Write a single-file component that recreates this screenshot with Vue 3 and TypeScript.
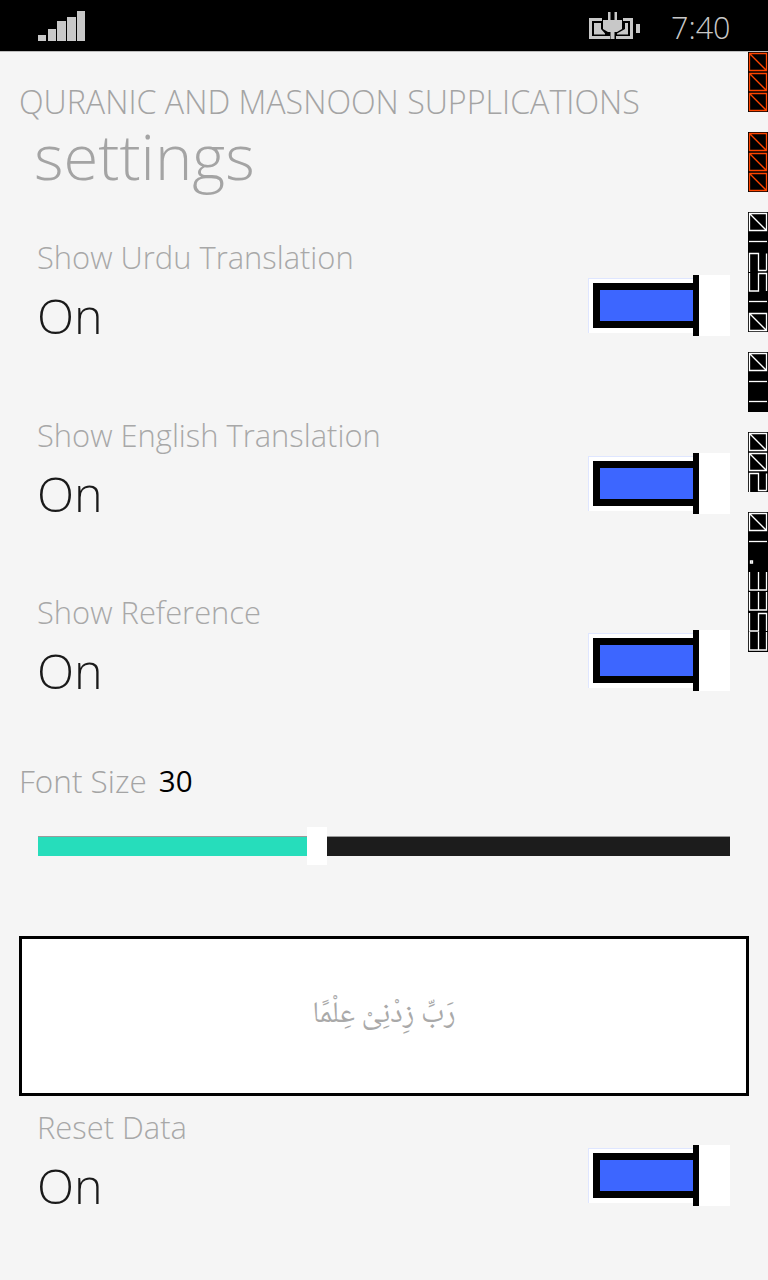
<script setup lang="ts">
interface Row { label: string; value: string }
const rows: Row[] = [
  { label: 'Show Urdu Translation', value: 'On' },
  { label: 'Show English Translation', value: 'On' },
  { label: 'Show Reference', value: 'On' },
]
const box = 'M1.5 1.5H18.5V18.5H1.5ZM1.5 1.5L18.5 18.5'
const line = 'M1 9.5H19'
const a = 'M1.5 20V1.5H10.5V18.5H18.5M18.5 1.5V18.5'
const b = 'M1.5 1V19H10.5V1.5H18.5V19'
const u = 'M1.5 0V18H18.5V0M10.5 0V18'
const dot = 'M2.5 9H4.5V11H2.5Z'
const groups: { color: string; cells: string[] }[] = [
  { color: '#ff4500', cells: [box, box, box] },
  { color: '#ff4500', cells: [box, box, box] },
  { color: '#ffffff', cells: [box, line, a, b, line, box] },
  { color: '#ffffff', cells: [box, line, line] },
  { color: '#ffffff', cells: [box, box, a] },
  { color: '#ffffff', cells: [box, line, dot, u, u, b, u] },
]
</script>

<template>
  <div class="page">
    <header class="status">
      <svg class="signal" width="47" height="30" viewBox="0 0 47 30">
        <rect x="0" y="24" width="8" height="6" />
        <rect x="10" y="18" width="8" height="12" />
        <rect x="19" y="10" width="9" height="20" />
        <rect x="29" y="6" width="9" height="24" />
        <rect x="39" y="0" width="8" height="30" />
      </svg>
      <svg class="battery" width="52" height="29" viewBox="0 0 52 29">
        <path d="M0 7H13V10H3V25H21V28H0ZM34 7H44V28H27V25H41V10H34Z" />
        <path d="M5 12H12V18L16 22.5V23.5H5ZM36 12H39V23.5H28V22.5L36 18Z" />
        <rect x="47" y="13" width="4" height="9" />
        <path d="M19 1H21.5V9H25.5V1H28V9H33V18L28 21H25.5V28H21.5V21H19L14 18V9H19Z" />
      </svg>
      <span class="clock">7:40</span>
    </header>

    <main class="content">
      <div class="app-title">QURANIC AND MASNOON SUPPLICATIONS</div>
      <h1 class="page-title">settings</h1>

      <section v-for="row in rows" :key="row.label" class="setting">
        <div class="setting-text">
          <div class="setting-label">{{ row.label }}</div>
          <div class="setting-value">{{ row.value }}</div>
        </div>
        <div class="toggle">
          <div class="toggle-frame"></div>
          <div class="toggle-knob"></div>
          <div class="toggle-rest"></div>
        </div>
      </section>

      <div class="font-row">
        <span class="font-label">Font Size</span>
        <span class="font-value">30</span>
      </div>

      <div class="slider">
        <div class="slider-on"></div>
        <div class="slider-thumb"></div>
        <div class="slider-off"></div>
      </div>

      <div class="preview">
        <span class="arabic" dir="rtl" lang="ar">رَبِّ زِدْنِىْ عِلْمًا</span>
      </div>

      <section class="setting reset">
        <div class="setting-text">
          <div class="setting-label">Reset Data</div>
          <div class="setting-value">On</div>
        </div>
        <div class="toggle">
          <div class="toggle-frame"></div>
          <div class="toggle-knob"></div>
          <div class="toggle-rest"></div>
        </div>
      </section>
    </main>

    <aside class="strip">
      <div v-for="(group, g) in groups" :key="g" class="strip-group">
        <svg
          v-for="(cell, c) in group.cells"
          :key="c"
          class="strip-cell"
          width="20"
          height="20"
          viewBox="0 0 20 20"
        >
          <path :d="cell" fill="none" :stroke="group.color" stroke-width="1.3" />
        </svg>
      </div>
    </aside>
  </div>
</template>

<style>
html, body { margin: 0; background: #f4f4f4; }
</style>

<style scoped>
.page {
  position: relative;
  width: 768px;
  height: 1280px;
  overflow: hidden;
  background: #f5f5f5;
  font-family: "Open Sans", "Noto Sans", sans-serif;
}
.status {
  height: 51px;
  background: #000;
  border-bottom: 1px solid #bdbdbd;
  display: flex;
  align-items: flex-start;
  color: #c8c8c8;
}
.signal { margin: 11px 0 0 38px; fill: #c8c8c8; }
.battery { margin: 11px 0 0 504px; fill: #c8c8c8; }
.clock {
  margin-left: 30px;
  font-size: 30.5px;
  font-weight: 300;
  line-height: 55px;
}
.content { display: flex; flex-direction: column; }
.app-title {
  margin: 30px 0 0 19px;
  font-size: 32.2px;
  line-height: 40px;
  font-weight: 300;
  color: #a4a4a4;
  white-space: nowrap;
}
.page-title {
  margin: 0 0 42px 34px;
  font-size: 63.3px;
  line-height: 68px;
  height: 68px;
  font-weight: 300;
  color: #a4a4a4;
}
.setting {
  height: 168.5px;
  padding: 0 38px 0 37px;
  display: flex;
  justify-content: space-between;
  align-items: flex-start;
}
.setting + .setting { margin-top: 9px; }
.setting-label {
  margin-top: 5px;
  font-size: 30.9px;
  line-height: 40px;
  font-weight: 300;
  color: #a8a8a8;
}
.setting-value {
  margin-top: 5px;
  font-size: 48.5px;
  line-height: 66px;
  font-weight: 300;
  color: #1a1a1a;
}
.toggle {
  margin-top: 43px;
  width: 142px;
  height: 61px;
  display: flex;
  align-items: center;
  position: relative;
  background:
    linear-gradient(#fff, #fff) no-repeat 1px 4px / 104px 54px,
    linear-gradient(#dfe6ff, #dfe6ff) no-repeat 0 3px / 105px 55px;
}
.toggle-frame {
  margin-left: 5px;
  width: 100px;
  height: 45px;
  box-sizing: border-box;
  border: 7px solid #000;
  border-right: 0;
  background: #3d66ff;
}
.toggle-knob { width: 6px; height: 61px; background: #000; }
.toggle-rest { flex: 1; height: 61px; background: #fff; }
.font-row {
  margin: 0 0 0 19px;
  height: 50px;
  display: flex;
  align-items: center;
  gap: 12px;
  font-size: 31.5px;
}
.font-label { font-weight: 300; color: #a4a4a4; }
.font-value { font-weight: 400; color: #000; font-size: 29.5px; }
.slider {
  margin: 21px 38px 0;
  height: 38px;
  display: flex;
  align-items: center;
}
.slider-on {
  width: 269px;
  height: 20px;
  background: #26ddbb;
  border-top: 1px solid #9a9a9a;
  box-sizing: border-box;
}
.slider-thumb { width: 20px; height: 38px; background: #fff; }
.slider-off {
  flex: 1;
  height: 20px;
  background: #1c1c1c;
  border-top: 1px solid #9a9a9a;
  box-sizing: border-box;
}
.preview {
  margin: 71px 19px 0;
  height: 160px;
  box-sizing: border-box;
  border: 3px solid #000;
  background: #fff;
  display: flex;
  align-items: center;
  justify-content: center;
}
.arabic {
  font-family: "Noto Naskh Arabic", "Noto Sans Arabic", "DejaVu Sans", serif;
  font-size: 30px;
  color: #a9a9a9;
}
.reset { margin-top: 6px; }
.strip {
  position: absolute;
  top: 52px;
  right: 0;
  width: 20px;
  display: flex;
  flex-direction: column;
  gap: 20px;
}
.strip-group { background: #000; display: flex; flex-direction: column; }
.strip-cell { display: block; }
</style>
